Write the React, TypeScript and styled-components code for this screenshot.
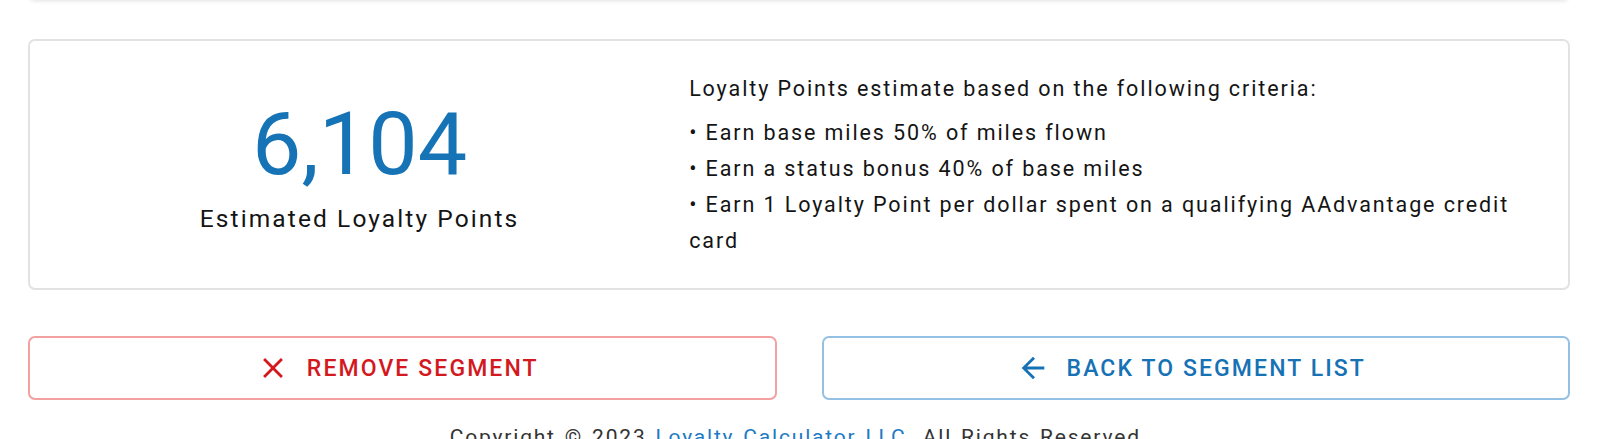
import React from "react";
import styled, { createGlobalStyle } from "styled-components";
import { MdArrowBack, MdClose } from "react-icons/md";

const GlobalStyle = createGlobalStyle`
  html, body {
    margin: 0;
    padding: 0;
    background: #ffffff;
    overflow: hidden;
  }
  body {
    font-family: Roboto, "Liberation Sans", sans-serif;
    color: #141414;
  }
`;

const Page = styled.div`
  padding: 0 30px 0 28px;
`;

const PreviousCard = styled.div`
  height: 20px;
  margin-top: -20px;
  border-radius: 0 0 8px 8px;
  box-shadow: 0 1px 4px rgba(0, 0, 0, 0.12);
  background: #ffffff;
`;

const EstimateCard = styled.section`
  margin-top: 39px;
  height: 251px;
  box-sizing: border-box;
  border: 2px solid #e2e2e2;
  border-radius: 7px;
  display: grid;
  grid-template-columns: 3fr 4fr;
  align-items: center;
`;

const Total = styled.div`
  display: flex;
  flex-direction: column;
  align-items: center;
`;

const TotalValue = styled.div`
  font-size: 88px;
  line-height: 96px;
  color: #1673b6;
`;

const TotalLabel = styled.div`
  font-size: 24.5px;
  line-height: 30px;
  letter-spacing: 2.1px;
  margin-top: 12px;
`;

const Criteria = styled.div`
  padding-right: 40px;
  font-size: 21.5px;
  line-height: 36px;
  letter-spacing: 1.9px;
`;

const CriteriaTitle = styled.p`
  margin: 0 0 8px;
`;

const CriteriaList = styled.ul`
  margin: 0;
  padding: 0;
  list-style: none;
`;

const CriteriaItem = styled.li`
  &::before {
    content: "• ";
  }
`;

const Actions = styled.div`
  margin-top: 46px;
  display: grid;
  grid-template-columns: 1fr 1fr;
  gap: 45px;
`;

const ActionButton = styled.button<{ $tone: "danger" | "primary" }>`
  height: 64px;
  box-sizing: border-box;
  display: flex;
  align-items: center;
  justify-content: center;
  gap: 17px;
  padding: 0 10px 0 0;
  background: #ffffff;
  border: 2px solid ${(p) => (p.$tone === "danger" ? "#f2a0a0" : "#94c0e3")};
  border-radius: 7px;
  color: ${(p) => (p.$tone === "danger" ? "#d3191e" : "#1672b5")};
  font-family: Roboto, "Liberation Sans", sans-serif;
  font-size: 23px;
  font-weight: 500;
  letter-spacing: 2.1px;
  text-transform: uppercase;
  cursor: pointer;

  svg {
    font-size: 34px;
  }
`;

const Footer = styled.footer`
  margin-top: 23px;
  text-align: center;
  font-size: 21px;
  line-height: 28px;
  letter-spacing: 1.8px;
  word-spacing: 2px;
  color: #333333;
`;

const FooterLink = styled.a`
  color: #1d7bc4;
  text-decoration: none;
`;

const criteria = [
  "Earn base miles 50% of miles flown",
  "Earn a status bonus 40% of base miles",
  "Earn 1 Loyalty Point per dollar spent on a qualifying AAdvantage credit card",
];

const App = () => {
  return (
    <>
      <GlobalStyle />
      <Page>
        <PreviousCard />
        <EstimateCard>
          <Total>
            <TotalValue>6,104</TotalValue>
            <TotalLabel>Estimated Loyalty Points</TotalLabel>
          </Total>
          <Criteria>
            <CriteriaTitle>
              Loyalty Points estimate based on the following criteria:
            </CriteriaTitle>
            <CriteriaList>
              {criteria.map((c) => (
                <CriteriaItem key={c}>{c}</CriteriaItem>
              ))}
            </CriteriaList>
          </Criteria>
        </EstimateCard>
        <Actions>
          <ActionButton $tone="danger">
            <MdClose />
            Remove Segment
          </ActionButton>
          <ActionButton $tone="primary">
            <MdArrowBack />
            Back to Segment List
          </ActionButton>
        </Actions>
        <Footer>
          Copyright © 2023 <FooterLink href="#">Loyalty Calculator LLC</FooterLink>. All Rights
          Reserved.
        </Footer>
      </Page>
    </>
  );
};

export default App;
